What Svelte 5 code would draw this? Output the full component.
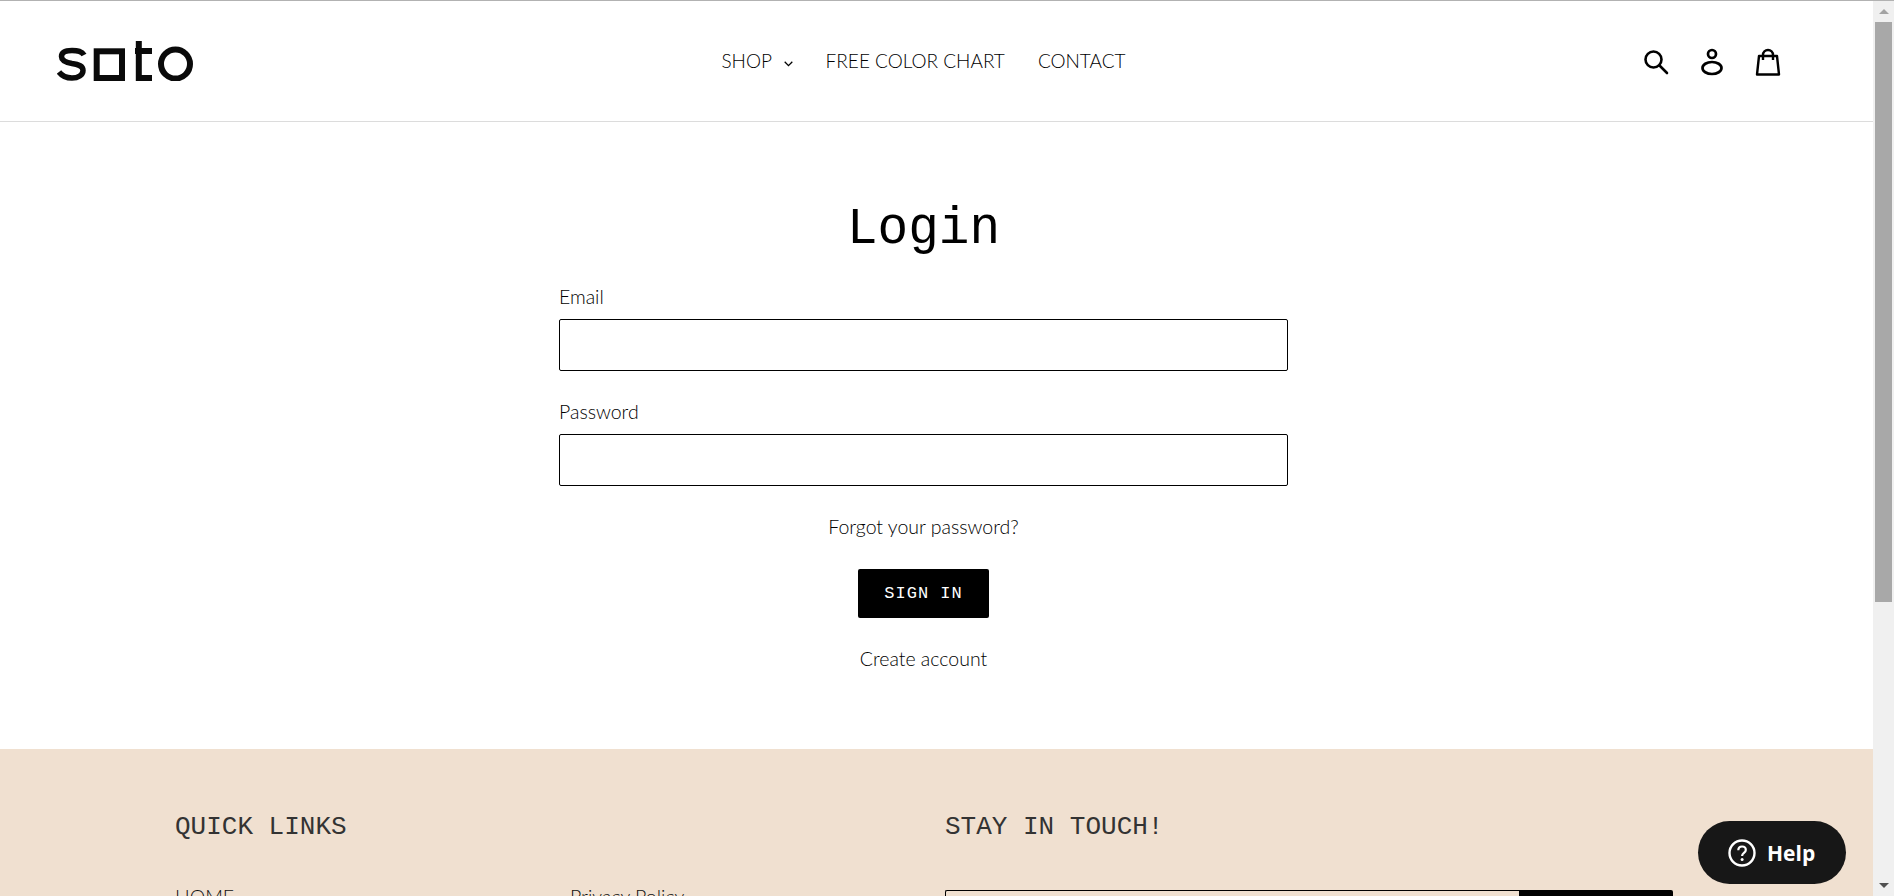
<script lang="ts">
	const navLinks = [
		{ label: 'SHOP', caret: true },
		{ label: 'FREE COLOR CHART', caret: false },
		{ label: 'CONTACT', caret: false }
	];
</script>

<div class="viewport">
	<div class="page">
		<header class="site-header">
			<a class="logo" href="#top" aria-label="soto">
				<svg width="136" height="40" viewBox="0 0 136 40" fill="none" stroke="#0a0a0a" stroke-width="6">
					<path d="M27 14C25 10 21 9.500 15 9.500 8 9.500 4.500 11.500 4.500 15.500 4.500 20 9 21.500 15 22.500 22 23.500 26 25 26 29.500 26 34 21 37 15 37 9 37 5 35 2 31" stroke-width="5.500" />
					<rect x="39.700" y="10.300" width="25.300" height="26.700" />
					<path d="M81.800 0V37H95M78 10H95" />
					<circle cx="118.500" cy="23" r="14.500" />
				</svg>
			</a>
			<nav class="main-nav">
				{#each navLinks as link}
					<a href="#top">
						{link.label}
						{#if link.caret}
							<svg class="caret" width="9" height="6" viewBox="0 0 9 6" fill="none" stroke="#000" stroke-width="1.300">
								<path d="M.7.8l3.800 3.800L8.300.8" />
							</svg>
						{/if}
					</a>
				{/each}
			</nav>
			<div class="header-icons">
				<svg width="26" height="26" viewBox="0 0 26 26" fill="none" stroke="#000" stroke-width="2.600" stroke-linecap="round">
					<circle cx="10.500" cy="10.500" r="8" />
					<path d="M16.500 16.500l7.500 7.500" />
				</svg>
				<svg width="24" height="28" viewBox="0 0 24 28" fill="none" stroke="#000" stroke-width="2.700">
					<circle cx="12" cy="6" r="4" />
					<ellipse cx="12" cy="20" rx="9.500" ry="6" />
				</svg>
				<svg width="26" height="28" viewBox="0 0 26 28" fill="none" stroke="#000" stroke-width="2.400" stroke-linejoin="round">
					<path d="M4 8h18l2 18.500H2z" />
					<path d="M8 12V7a5 5 0 0 1 10 0v5" />
				</svg>
			</div>
		</header>

		<main class="login">
			<h1>Login</h1>
			<form class="login-form" onsubmit={(e) => e.preventDefault()}>
				<label for="email">Email</label>
				<input id="email" type="email" />
				<label for="password">Password</label>
				<input id="password" type="password" />
				<a class="text-link" href="#top">Forgot your password?</a>
				<button class="sign-in" type="submit">SIGN IN</button>
				<a class="text-link" href="#top">Create account</a>
			</form>
		</main>

		<footer class="site-footer">
			<div class="footer-links">
				<h2>QUICK LINKS</h2>
				<ul>
					<li><a href="#top">HOME</a></li>
					<li><a href="#top">Privacy Policy</a></li>
				</ul>
			</div>
			<div class="footer-news">
				<h2>STAY IN TOUCH!</h2>
				<div class="subscribe">
					<input type="email" aria-label="Email" />
					<button type="button">SUBSCRIBE</button>
				</div>
			</div>
		</footer>
	</div>

	<div class="scrollbar" aria-hidden="true">
		<span class="arrow up"></span>
		<div class="track"><div class="thumb"></div></div>
		<span class="arrow down"></span>
	</div>

	<button class="help" type="button">
		<svg width="28" height="28" viewBox="0 0 28 28" fill="none" stroke="#fff">
			<circle cx="14" cy="14" r="12.500" stroke-width="2.400" />
			<path d="M10.300 11.300c0-2.300 1.700-3.800 3.800-3.800s3.700 1.400 3.700 3.400c0 3-3.700 3-3.700 6" stroke-width="2.200" />
			<circle cx="14.100" cy="20.600" r="1.500" fill="#fff" stroke="none" />
		</svg>
		Help
	</button>
</div>

<style>
	:global(body) {
		margin: 0;
		background: #fff;
	}

	.viewport {
		position: relative;
		display: flex;
		height: 896px;
		overflow: hidden;
		border-top: 1px solid #b2b2b2;
		box-sizing: border-box;
		font-family: 'Lato', 'Open Sans', sans-serif;
		font-weight: 300;
		color: #000;
	}

	.page {
		flex: 1;
		min-width: 0;
	}

	.site-header {
		display: grid;
		grid-template-columns: 1fr auto 1fr;
		align-items: center;
		height: 120px;
		padding: 0 83px 0 57px;
		border-bottom: 1px solid #dcdcdc;
	}

	.logo {
		display: block;
		height: 40px;
	}

	.main-nav {
		display: flex;
		gap: 33px;
		font-size: 19px;
		margin-top: -1px;
	}

	.main-nav a {
		color: #000;
		text-decoration: none;
	}

	.caret {
		margin-left: 7px;
		vertical-align: 1px;
	}

	.header-icons {
		display: flex;
		align-items: center;
		justify-content: flex-end;
		gap: 31px;
		margin: 2px 9px 0 0;
	}

	.login {
		height: 627px;
		padding: 80px 26px 0 0;
		box-sizing: border-box;
	}

	h1 {
		margin: 0;
		text-align: center;
		font-family: 'Liberation Mono', monospace;
		font-size: 51px;
		font-weight: 400;
		line-height: 56px;
		color: #000;
	}

	.login-form {
		display: flex;
		flex-direction: column;
		width: 729px;
		margin: 27px auto 0;
		font-size: 19.500px;
	}

	label {
		line-height: 24px;
		margin-bottom: 10px;
	}

	.login-form input {
		height: 52px;
		margin-bottom: 29px;
		box-sizing: border-box;
		border: 1px solid #000;
		border-radius: 2px;
		background: #fff;
	}

	.text-link {
		align-self: center;
		line-height: 24px;
		color: #000;
		text-decoration: none;
	}

	.sign-in {
		align-self: center;
		width: 131px;
		height: 49px;
		margin: 30px 0 29px;
		border: 0;
		border-radius: 2px;
		background: #000;
		color: #fff;
		font-family: 'Liberation Mono', monospace;
		font-size: 17px;
		letter-spacing: 1px;
	}

	.site-footer {
		display: grid;
		grid-template-columns: 770px 729px;
		height: 147px;
		padding: 63px 0 0 175px;
		box-sizing: border-box;
		background: #f0e0d0;
		overflow: hidden;
	}

	h2 {
		margin: 0;
		font-family: 'Liberation Mono', monospace;
		font-size: 26px;
		font-weight: 400;
		line-height: 30px;
		color: #333;
	}

	ul {
		display: grid;
		grid-template-columns: 395px 1fr;
		margin: 43px 0 0;
		padding: 0;
		list-style: none;
		font-size: 19.500px;
	}

	ul a {
		color: #111;
		text-decoration: none;
	}

	.subscribe {
		display: flex;
		width: 728px;
		height: 52px;
		margin-top: 48px;
	}

	.subscribe input {
		flex: 1;
		min-width: 0;
		box-sizing: border-box;
		border: 1px solid #000;
		border-right: 0;
		border-radius: 2px 0 0 2px;
		background: transparent;
	}

	.subscribe button {
		width: 154px;
		border: 0;
		border-radius: 0 2px 2px 0;
		background: #000;
	}

	.scrollbar {
		display: flex;
		flex-direction: column;
		flex: none;
		width: 21px;
		background: #f0f0f0;
	}

	.arrow {
		flex: none;
		height: 21px;
		display: flex;
		align-items: center;
		justify-content: center;
	}

	.arrow::before {
		content: '';
		border-left: 5px solid transparent;
		border-right: 5px solid transparent;
	}

	.up::before {
		border-bottom: 5px solid #a3a3a3;
	}

	.down::before {
		border-top: 5px solid #505050;
	}

	.track {
		flex: 1;
		padding: 0 2px;
	}

	.thumb {
		height: 580px;
		background: #a8a8a8;
	}

	.help {
		position: absolute;
		left: 1698px;
		top: 820px;
		display: flex;
		align-items: center;
		gap: 11px;
		width: 148px;
		height: 63px;
		padding: 0 0 0 30px;
		border: 0;
		border-radius: 32px;
		background: #171717;
		color: #fff;
		font-family: 'Open Sans', sans-serif;
		font-size: 21px;
		font-weight: 700;
	}
</style>
